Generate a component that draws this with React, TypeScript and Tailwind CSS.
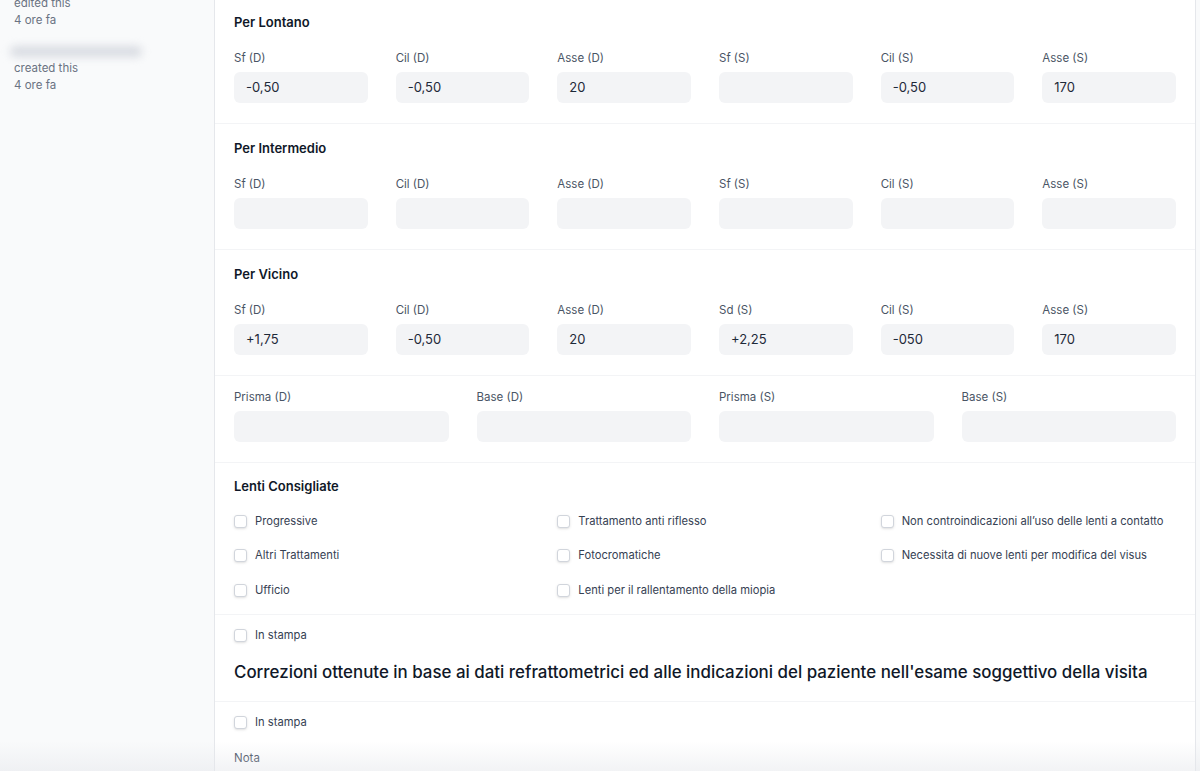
import type { ReactNode } from 'react'

type Field = { label: string; value?: string }

const LONTANO: Field[] = [
  { label: 'Sf (D)', value: '-0,50' },
  { label: 'Cil (D)', value: '-0,50' },
  { label: 'Asse (D)', value: '20' },
  { label: 'Sf (S)' },
  { label: 'Cil (S)', value: '-0,50' },
  { label: 'Asse (S)', value: '170' },
]

const INTERMEDIO: Field[] = [
  { label: 'Sf (D)' },
  { label: 'Cil (D)' },
  { label: 'Asse (D)' },
  { label: 'Sf (S)' },
  { label: 'Cil (S)' },
  { label: 'Asse (S)' },
]

const VICINO: Field[] = [
  { label: 'Sf (D)', value: '+1,75' },
  { label: 'Cil (D)', value: '-0,50' },
  { label: 'Asse (D)', value: '20' },
  { label: 'Sd (S)', value: '+2,25' },
  { label: 'Cil (S)', value: '-050' },
  { label: 'Asse (S)', value: '170' },
]

const PRISMA: Field[] = [
  { label: 'Prisma (D)' },
  { label: 'Base (D)' },
  { label: 'Prisma (S)' },
  { label: 'Base (S)' },
]

// grid order: row by row, three columns
const LENTI = [
  'Progressive',
  'Trattamento anti riflesso',
  "Non controindicazioni all\u2019uso delle lenti a contatto",
  'Altri Trattamenti',
  'Fotocromatiche',
  'Necessita di nuove lenti per modifica del visus',
  'Ufficio',
  'Lenti per il rallentamento della miopia',
]

function Section({ children, className = '' }: { children: ReactNode; className?: string }) {
  return <div className={`border-b border-gray-100 px-[19px] ${className}`}>{children}</div>
}

function Title({ children }: { children: ReactNode }) {
  return <h3 className="text-[13px] font-semibold leading-4 text-gray-900">{children}</h3>
}

function FieldBox({ label, value }: Field) {
  return (
    <div>
      <label className="block text-[11.5px] leading-4 text-gray-600">{label}</label>
      <div className="mt-1.5 flex h-[31px] items-center rounded-md bg-[#f3f4f6] px-3 text-[13px] text-gray-800">
        {value}
      </div>
    </div>
  )
}

function Check({ label }: { label: string }) {
  return (
    <label className="flex h-5 items-center gap-2 whitespace-nowrap text-[11.2px] text-gray-700">
      <span className="h-[13px] w-[13px] shrink-0 rounded-[3px] border border-gray-300 bg-white shadow-sm" />
      {label}
    </label>
  )
}

export default function App() {
  return (
    <div className="relative flex h-[771px] overflow-hidden bg-[#f9fafb] font-['Inter',sans-serif]">
      {/* activity sidebar */}
      <aside className="w-[215px] shrink-0 border-r border-gray-200 px-[14px] text-[11.5px] leading-[17px] text-gray-500">
        <div className="-mt-[5px]">
          <p>edited this</p>
          <p>4 ore fa</p>
        </div>
        <div className="mt-[14px]">
          <div className="-ml-1 flex h-[17px] items-center">
            <div className="h-[11px] w-[132px] rounded-full bg-gray-300/80 blur-[4px]" />
          </div>
          <p>created this</p>
          <p>4 ore fa</p>
        </div>
      </aside>

      <main className="w-[981px] shrink-0 border-r border-gray-200 bg-white">
        <div className="-mt-[2px]">
          <Section className="pt-4 pb-5">
            <Title>Per Lontano</Title>
            <div className="mt-5 grid grid-cols-6 gap-x-7">
              {LONTANO.map((f) => (
                <FieldBox key={f.label} {...f} />
              ))}
            </div>
          </Section>

          <Section className="pt-4 pb-5">
            <Title>Per Intermedio</Title>
            <div className="mt-5 grid grid-cols-6 gap-x-7">
              {INTERMEDIO.map((f) => (
                <FieldBox key={f.label} {...f} />
              ))}
            </div>
          </Section>

          <Section className="pt-4 pb-5">
            <Title>Per Vicino</Title>
            <div className="mt-5 grid grid-cols-6 gap-x-7">
              {VICINO.map((f) => (
                <FieldBox key={f.label} {...f} />
              ))}
            </div>
          </Section>

          <Section className="pt-[13px] pb-5">
            <div className="grid grid-cols-4 gap-x-7">
              {PRISMA.map((f) => (
                <FieldBox key={f.label} {...f} />
              ))}
            </div>
          </Section>

          <Section className="pt-[15px] pb-[14px]">
            <Title>Lenti Consigliate</Title>
            <div className="mt-[17px] grid grid-cols-3 gap-x-7 gap-y-[14.5px]">
              {LENTI.map((l) => (
                <Check key={l} label={l} />
              ))}
            </div>
          </Section>

          <Section className="pt-[10px] pb-[15px]">
            <Check label="In stampa" />
            <h2 className="mt-[13px] text-[16.9px] font-medium leading-7 text-gray-900">
              Correzioni ottenute in base ai dati refrattometrici ed alle indicazioni del paziente nell'esame soggettivo della visita
            </h2>
          </Section>

          <div className="px-[19px] pt-[10px]">
            <Check label="In stampa" />
            <p className="mt-[18px] text-[11.5px] leading-4 text-gray-700">Nota</p>
          </div>
        </div>
      </main>

      <div className="pointer-events-none absolute inset-x-0 bottom-0 h-[30px] bg-gradient-to-b from-transparent to-gray-200/50" />
    </div>
  )
}
